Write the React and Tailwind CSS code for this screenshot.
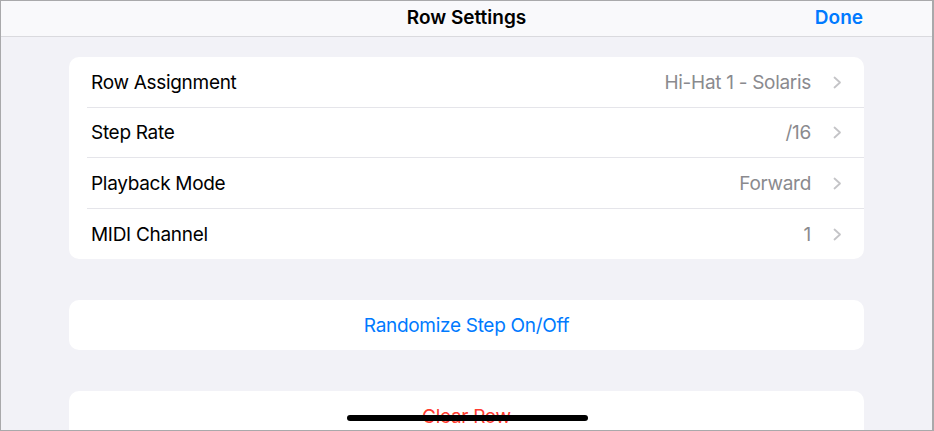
import React from "react";

const rows = [
  { label: "Row Assignment", value: "Hi-Hat 1 - Solaris" },
  { label: "Step Rate", value: "/16" },
  { label: "Playback Mode", value: "Forward" },
  { label: "MIDI Channel", value: "1" },
];

function Chevron() {
  return (
    <svg width="9" height="13" viewBox="0 0 9 13" fill="none" className="ml-[21px] -mt-[1px]">
      <path d="M1.5 1.5L7 6.5L1.5 11.5" stroke="#c4c4c7" strokeWidth="1.8" strokeLinecap="round" strokeLinejoin="round" />
    </svg>
  );
}

function App() {
  return (
    <div
      className="w-[934px] h-[431px] overflow-hidden bg-[#f2f2f7] border-t border-b border-l border-r-2 border-[#a9a9ab] flex flex-col relative"
      style={{ fontFamily: "Inter, 'Noto Sans', sans-serif" }}
    >
      {/* Nav bar */}
      <header className="h-[36px] shrink-0 bg-[#f9f9fb] border-b border-[#dadade] flex items-center justify-center relative">
        <h1 className="text-[19px] font-semibold text-black">Row Settings</h1>
        <button className="absolute right-[69px] text-[19px] font-semibold text-[#007aff]">Done</button>
      </header>

      <main className="flex flex-col px-[68px] pt-[20px]">
        {/* Settings list */}
        <div className="bg-white rounded-[10px] overflow-hidden">
          {rows.map((r, i) => (
            <div key={r.label} className="h-[50.5px] flex pl-[18px]">
              <div
                className={
                  "flex-1 flex items-center pl-[4px] pr-[22px] pt-[2px] " +
                  (i < rows.length - 1 ? "border-b border-[#e5e5ea]" : "")
                }
              >
                <span className="flex-1 text-[19px] text-black tracking-[-0.3px]">{r.label}</span>
                <span className="text-[19px] text-[#8a8a8e] tracking-[-0.3px] mr-[1px]">{r.value}</span>
                <Chevron />
              </div>
            </div>
          ))}
        </div>

        {/* Randomize */}
        <div className="mt-[41px] bg-white rounded-[10px] h-[50px] flex items-center justify-center pt-[2px]">
          <span className="text-[19px] text-[#007aff] tracking-[-0.3px]">Randomize Step On/Off</span>
        </div>

        {/* Clear Row */}
        <div className="mt-[41px] bg-white rounded-[10px] h-[50px] flex items-center justify-center pt-[2px]">
          <span className="text-[19px] text-[#ff3b30] tracking-[-0.3px]">Clear Row</span>
        </div>
      </main>

      {/* Home indicator */}
      <div className="absolute left-[346px] top-[414px] w-[241px] h-[6px] rounded-full bg-black" />
    </div>
  );
}

export default App;
